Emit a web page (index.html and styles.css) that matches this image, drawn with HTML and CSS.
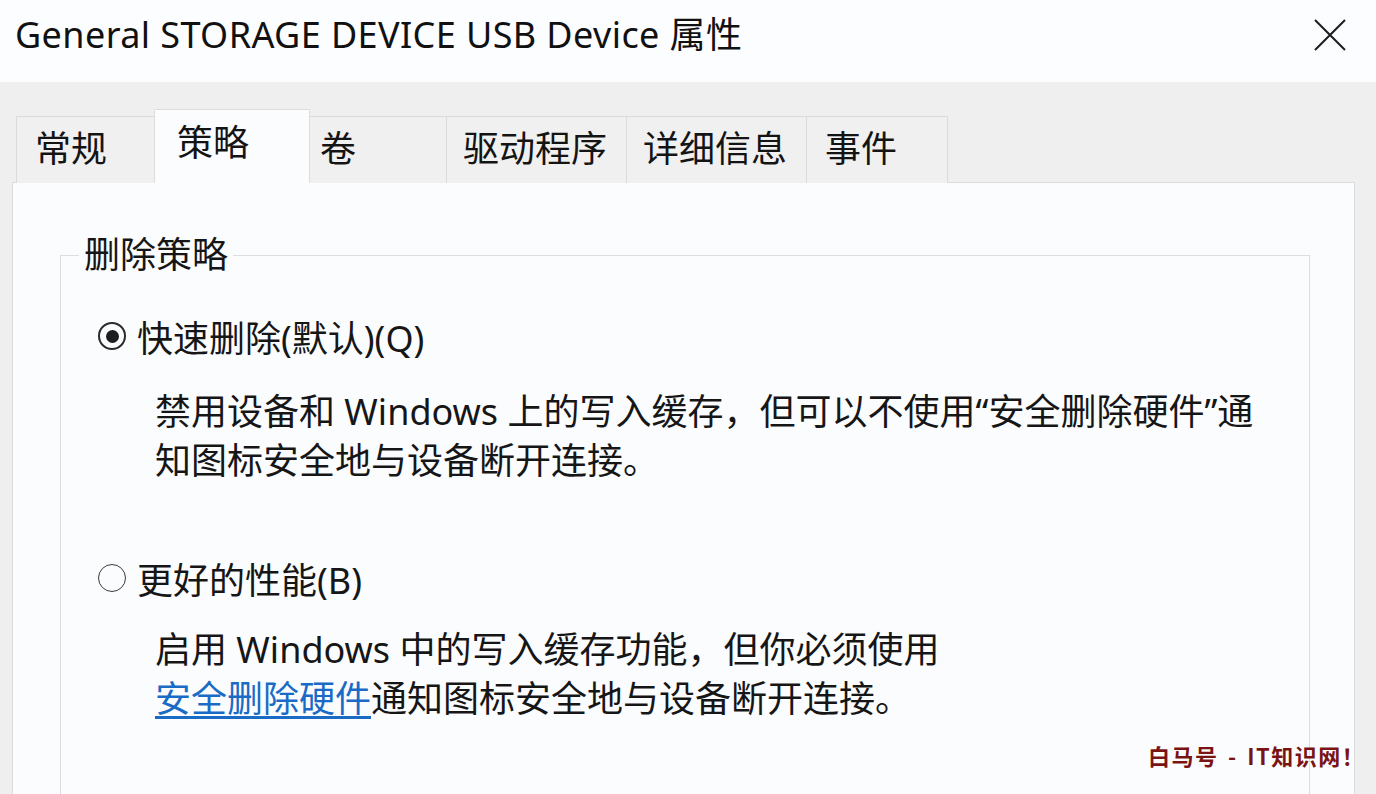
FILE: index.html
```html
<!DOCTYPE html>
<html lang="zh-CN">
<head>
<meta charset="utf-8">
<title>General STORAGE DEVICE USB Device 属性</title>
<link rel="stylesheet" href="styles.css">
</head>
<body>
<div class="window">
  <header class="titlebar">
    <h1 class="title">General STORAGE DEVICE USB Device 属性</h1>
    <button class="close" aria-label="关闭">
      <svg width="32" height="32" viewBox="0 0 32 32"><path d="M1 1 L31 31 M31 1 L1 31" stroke="#1c1c1c" stroke-width="2" fill="none"/></svg>
    </button>
  </header>
  <nav class="tabs">
    <div class="tab tab-a">常规</div>
    <div class="tab tab-sel">策略</div>
    <div class="tab tab-b">卷</div>
    <div class="tab tab-c">驱动程序</div>
    <div class="tab tab-c">详细信息</div>
    <div class="tab tab-d">事件</div>
  </nav>
  <main class="panel">
    <fieldset class="group">
      <legend class="legend">删除策略</legend>
      <div class="options">
        <div class="option">
          <span class="radio checked"></span>
          <span class="label">快速删除(默认)(Q)</span>
        </div>
        <p class="desc">禁用设备和 Windows 上的写入缓存，但可以不使用“安全删除硬件”通<br>知图标安全地与设备断开连接。</p>
        <div class="option option-2">
          <span class="radio"></span>
          <span class="label">更好的性能(B)</span>
        </div>
        <p class="desc desc-2">启用 Windows 中的写入缓存功能，但你必须使用<br><a class="link" href="#">安全删除硬件</a>通知图标安全地与设备断开连接。</p>
      </div>
    </fieldset>
  </main>
  <div class="watermark">白马号 - IT知识网！</div>
</div>
</body>
</html>
```
FILE: styles.css
```css
* { box-sizing: border-box; }
html, body { margin: 0; padding: 0; }
body {
  background: #efeff0;
  font-family: "Noto Sans", "Noto Sans CJK SC", sans-serif;
  color: #1a1a1a;
  overflow: hidden;
}
.window {
  width: 1376px;
  height: 794px;
  position: relative;
  overflow: hidden;
}
.titlebar {
  height: 82px;
  background: #fcfdff;
  display: flex;
  align-items: flex-start;
  justify-content: space-between;
  padding: 0 30px 0 15px;
}
.title {
  margin: 0;
  font-weight: 400;
  font-size: 36px;
  line-height: 70px;
  letter-spacing: 0.4px;
  color: #111;
}
.close {
  margin-top: 19px;
  border: 0;
  background: none;
  padding: 0;
  width: 32px;
  height: 32px;
}
.tabs {
  display: flex;
  align-items: flex-end;
  padding-left: 17px;
  margin-top: 27px;
  height: 74px;
  position: relative;
  z-index: 1;
}
.tab {
  height: 67px;
  background: #f0f0f0;
  border: 1px solid #dadbdc;
  border-bottom: 0;
  margin-left: -1px;
  font-size: 36px;
  line-height: 64px;
  padding-left: 16px;
  color: #141414;
}
.tab-a { width: 139px; padding-left: 18px; }
.tab-b { width: 139px; padding-left: 11px; }
.tab-c { width: 181px; }
.tab-d { width: 142px; padding-left: 18px; }
.tab-sel {
  width: 156px;
  height: 74px;
  background: #fbfcfe;
  padding-left: 22px;
  line-height: 66px;
  margin-left: -1px;
  margin-right: -1px;
  position: relative;
  z-index: 2;
  border-color: #dcdddf;
  border-radius: 2px 2px 0 0;
}
.panel {
  margin: -1px 21px 0 12px;
  height: 640px;
  background: #fbfcfe;
  border: 1px solid #dadbdc;
  padding: 50px 44px 0 47px;
}
.group {
  margin: 0;
  border: 1px solid #dcdde0;
  border-bottom: 0;
  padding: 0 0 0 18px;
  min-width: 0;
  height: 700px;
}
.legend {
  font-size: 36px;
  line-height: 44px;
  padding: 0 5px;
  color: #161616;
}
.options {
  padding-top: 34px;
  padding-left: 19px;
}
.option {
  display: flex;
  align-items: center;
  height: 50px;
  font-size: 36px;
}
.option-2 { margin-top: 68px; }
.radio {
  width: 28px;
  height: 28px;
  border: 2px solid #2a2a2a;
  border-radius: 50%;
  display: flex;
  align-items: center;
  justify-content: center;
  margin-right: 11px;
  flex: none;
}
.radio.checked::after {
  content: "";
  width: 13px;
  height: 13px;
  border-radius: 50%;
  background: #1e1e1e;
}
.option-2 .radio { border: 1.5px solid #3a3a3a; }
.label { color: #161616; }
.desc {
  margin: 26px 0 0 57px;
  font-size: 36px;
  line-height: 49px;
  color: #161616;
}
.desc-2 { margin-top: 22px; }
.link {
  color: #1a6bc6;
  text-decoration: underline;
  text-underline-offset: 4px;
}
.watermark {
  position: absolute;
  left: 1148px;
  top: 740px;
  font-family: "Noto Sans CJK SC", sans-serif;
  font-size: 22px;
  line-height: 30px;
  font-weight: 700;
  color: #7a1414;
  letter-spacing: 1.5px;
  word-spacing: 3px;
}
```
